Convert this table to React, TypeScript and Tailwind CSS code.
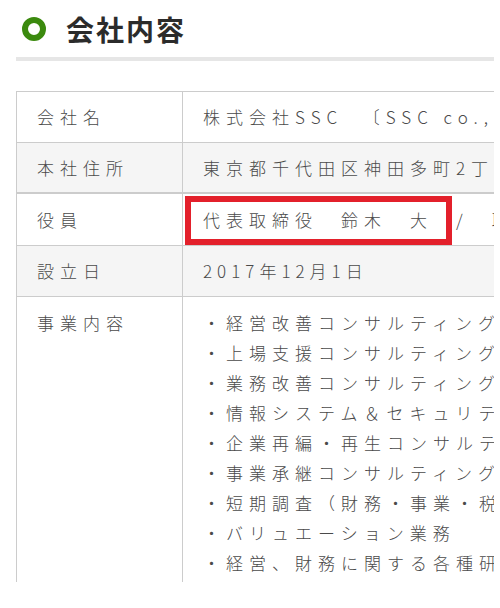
import React from "react";

const font = { fontFamily: '"Noto Sans CJK JP", "Noto Sans", sans-serif' };

const items = [
  "・経営改善コンサルティング",
  "・上場支援コンサルティング",
  "・業務改善コンサルティング",
  "・情報システム＆セキュリティコンサルティング",
  "・企業再編・再生コンサルティング",
  "・事業承継コンサルティング",
  "・短期調査（財務・事業・税務）",
  "・バリュエーション業務",
  "・経営、財務に関する各種研修",
];

export default function App() {
  return (
    <div className="w-[500px] h-[608px] bg-white overflow-hidden" style={font}>
      <div className="h-[57px] flex items-center pl-[22px]">
        <div className="w-[24px] h-[24px] rounded-full border-[6px] border-[#3b8a0e]" />
        <h1 className="ml-[20px] text-[28px] font-bold tracking-[2px] text-[#2b2b2b] leading-none">
          会社内容
        </h1>
      </div>
      <div className="ml-4 w-[478px] h-[4px] bg-[#e6e6e6]" />
      <div className="ml-4 mt-[30px] w-[478px] overflow-hidden">
        <div className="w-[760px] border-t border-l border-[#cccccc] text-[17px] font-light tracking-[6px] text-[#4a4a4a] whitespace-nowrap">
          <div className="flex h-[51px] border-b border-[#cccccc] bg-white">
            <div className="w-[166px] shrink-0 border-r border-[#cccccc] pl-5 flex items-center">会社名</div>
            <div className="flex-1 pl-5 flex items-center">
              株式会社SSC<span className="ml-[5px]">　〔SSC co.,Ltd.〕</span>
            </div>
          </div>
          <div className="flex h-[51px] border-b-2 border-[#cccccc] bg-[#f5f5f5]">
            <div className="w-[166px] shrink-0 border-r border-[#cccccc] pl-5 flex items-center">本社住所</div>
            <div className="flex-1 pl-5 flex items-center">東京都千代田区神田多町2丁目</div>
          </div>
          <div className="flex h-[52px] border-b border-[#cccccc] bg-white">
            <div className="w-[166px] shrink-0 border-r border-[#cccccc] pl-5 flex items-center">役員</div>
            <div className="relative flex-1 pl-5 flex items-center">
              代表取締役　鈴木　大　/　取締役
              <div className="absolute left-[2px] top-[2px] w-[267px] h-[49px] border-[6px] border-[#e3202b]" />
            </div>
          </div>
          <div className="flex h-[51px] border-b border-[#cccccc] bg-[#f5f5f5]">
            <div className="w-[166px] shrink-0 border-r border-[#cccccc] pl-5 flex items-center">設立日</div>
            <div className="flex-1 pl-5 flex items-center tracking-[5px]">2017年12月1日</div>
          </div>
          <div className="flex h-[285px] bg-white">
            <div className="w-[166px] shrink-0 border-r border-[#cccccc] pl-5 pt-[11px] leading-[30px]">事業内容</div>
            <div className="flex-1 pl-5 pt-[11px] leading-[30px]">
              {items.map((t) => (
                <div key={t}>{t}</div>
              ))}
            </div>
          </div>
        </div>
      </div>
    </div>
  );
}
